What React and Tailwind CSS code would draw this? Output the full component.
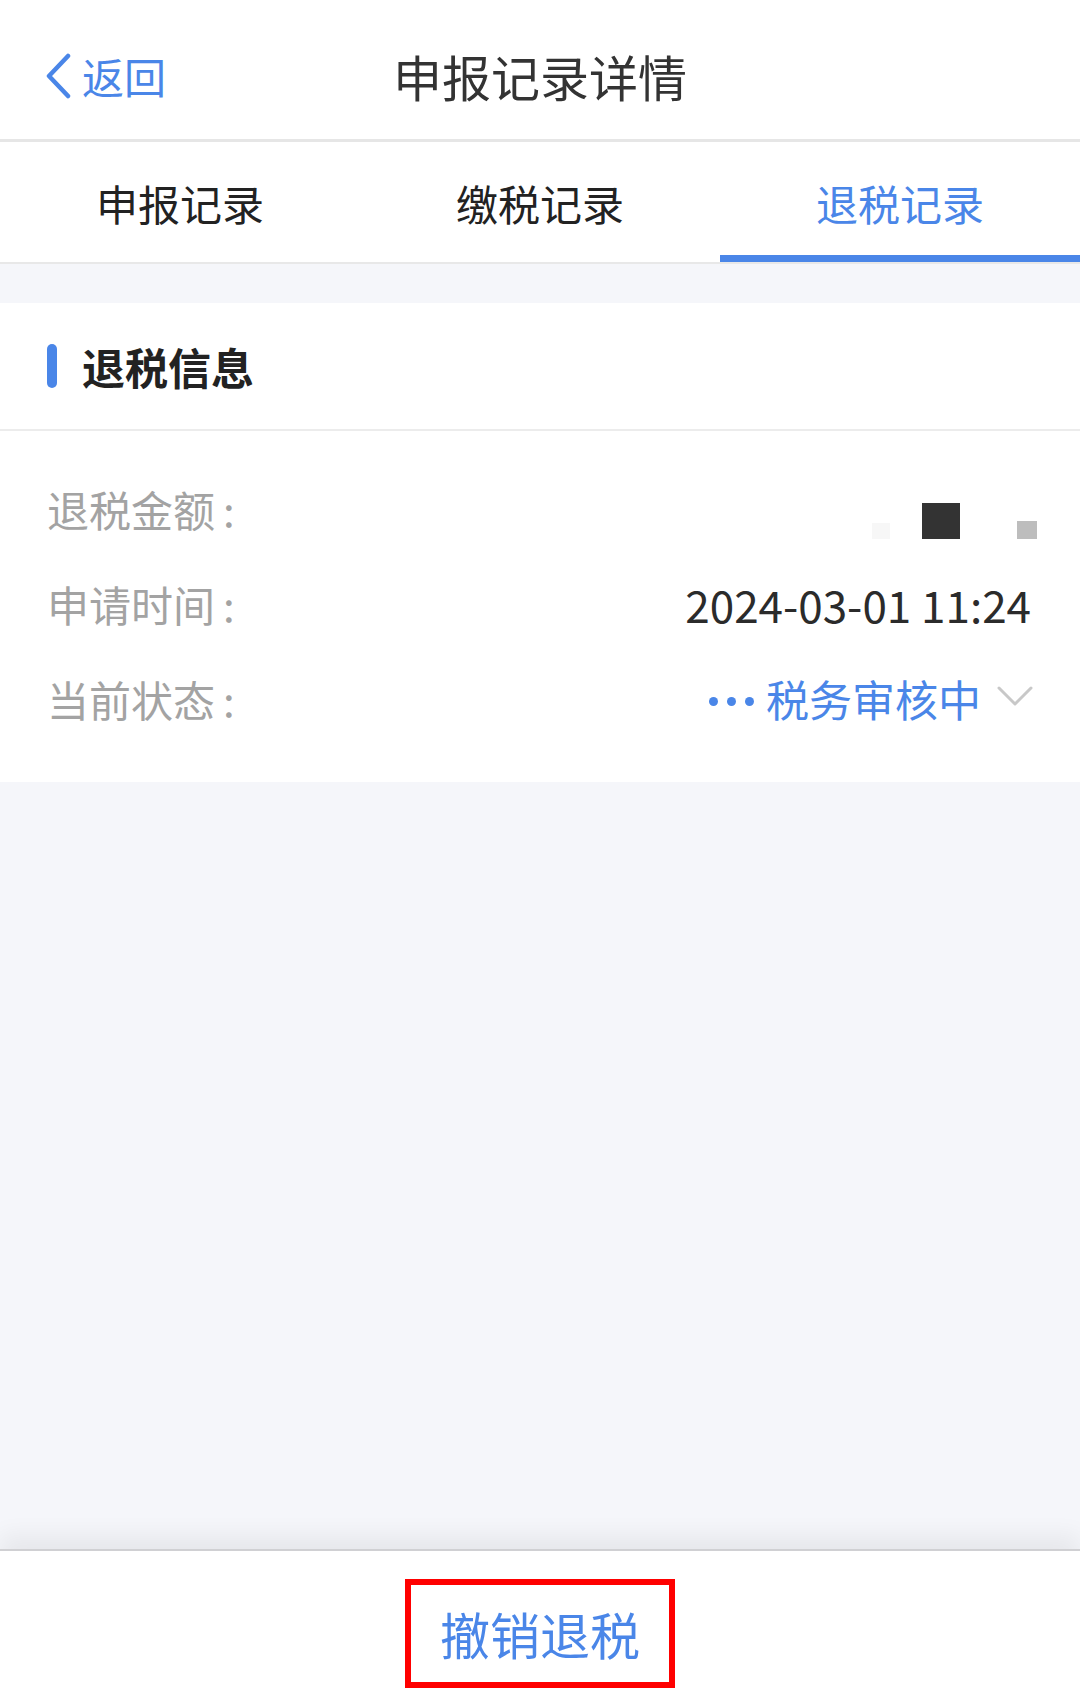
import React from 'react';

const font = { fontFamily: '"Noto Sans CJK SC", "Noto Sans", sans-serif' };

const tabs = ['申报记录', '缴税记录', '退税记录'];

const Row = ({ label, children }) => (
  <div className="flex items-center justify-between h-[95px]">
    <span className="text-[42px] text-[#a3a3a3]">
      {label}
      <span className="ml-[8px]">:</span>
    </span>
    <div className="flex items-center">{children}</div>
  </div>
);

const App = () => {
  const active = 2;

  return (
    <div className="w-[1080px] h-[1699px] flex flex-col bg-[#f5f6fa]" style={font}>
      {/* Header */}
      <div className="relative h-[142px] pt-[12px] bg-white border-b-[3px] border-[#e6e6e6] flex items-center justify-center">
        <button className="absolute left-[44px] top-[12px] bottom-0 flex items-center text-[#4a86e8]">
          <svg width="28" height="46" viewBox="0 0 28 46" fill="none">
            <path d="M24 3L5 23l19 20" stroke="currentColor" strokeWidth="4.5" strokeLinecap="round" strokeLinejoin="round" />
          </svg>
          <span className="ml-[10px] text-[42px] leading-none">返回</span>
        </button>
        <h1 className="text-[49px] text-[#333] font-normal">申报记录详情</h1>
      </div>

      {/* Tabs */}
      <div className="h-[122px] bg-white border-b-2 border-[#e8e8e8] flex">
        {tabs.map((t, i) => (
          <div key={t} className="relative flex-1 flex items-center justify-center">
            <span className={`text-[42px] ${i === active ? 'text-[#4a86e8]' : 'text-[#222]'}`}>{t}</span>
            {i === active && <div className="absolute left-0 right-0 bottom-0 h-[7px] bg-[#4a86e8]" />}
          </div>
        ))}
      </div>

      {/* Refund info card */}
      <div className="mt-[39px] bg-white">
        <div className="h-[128px] flex items-center px-[47px] border-b-2 border-[#ececec]">
          <div className="w-[10px] h-[44px] rounded-full bg-[#4a86e8]" />
          <span className="ml-[25px] text-[43px] font-bold text-[#222]">退税信息</span>
        </div>
        <div className="px-[47px] pt-[30px] pb-[36px]">
          <Row label="退税金额">
            {/* amount is masked in the screenshot */}
            <div className="flex items-start pt-[24px] mr-[-4px]">
              <div className="w-[18px] h-[16px] bg-[#f7f7f7] mt-[20px]" />
              <div className="ml-[32px] w-[38px] h-[36px] bg-[#333]" />
              <div className="ml-[57px] w-[20px] h-[18px] bg-[#bdbdbd] mt-[18px]" />
            </div>
          </Row>
          <Row label="申请时间">
            <span className="text-[44px] text-[#2b2b2b] pr-[2px]">2024-03-01 11:24</span>
          </Row>
          <Row label="当前状态">
            <div className="flex items-center gap-[9px] mr-[12px] mt-[6px]">
              <span className="w-[9px] h-[9px] rounded-full bg-[#4a86e8]" />
              <span className="w-[9px] h-[9px] rounded-full bg-[#4a86e8]" />
              <span className="w-[9px] h-[9px] rounded-full bg-[#4a86e8]" />
            </div>
            <span className="text-[43px] text-[#4a86e8]">税务审核中</span>
            <svg className="ml-[16px] mb-[6px]" width="36" height="22" viewBox="0 0 36 22" fill="none">
              <path d="M2 3l16 16L34 3" stroke="#c8c8c8" strokeWidth="3" strokeLinecap="round" strokeLinejoin="round" />
            </svg>
          </Row>
        </div>
      </div>

      <div className="flex-1" />

      {/* Footer */}
      <div className="h-[150px] bg-white border-t-2 border-[#d0d0d3] shadow-[0_-14px_22px_rgba(0,0,0,0.06)] flex items-center justify-center">
        <button className="w-[270px] h-[109px] mt-[16px] border-[6px] border-[#ff0000] flex items-center justify-center">
          <span className="text-[50px] text-[#4a86e8]">撤销退税</span>
        </button>
      </div>
    </div>
  );
};

export default App;
